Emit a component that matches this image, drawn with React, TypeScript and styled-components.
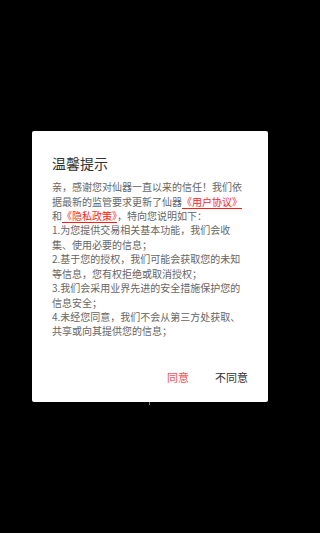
import React from "react";
import styled, { createGlobalStyle } from "styled-components";

const GlobalStyle = createGlobalStyle`
  html, body {
    margin: 0;
    padding: 0;
    background: #000000;
  }
  body {
    font-family: "Noto Sans CJK SC", "Noto Sans", sans-serif;
  }
`;

interface Piece {
  text: string;
  link?: boolean;
}

const lines: Piece[][] = [
  [{ text: "亲，感谢您对仙器一直以来的信任！我们依" }],
  [{ text: "据最新的监管要求更新了仙器" }, { text: "《用户协议》", link: true }],
  [{ text: "和" }, { text: "《隐私政策》", link: true }, { text: "，特向您说明如下：" }],
  [{ text: "1.为您提供交易相关基本功能，我们会收" }],
  [{ text: "集、使用必要的信息；" }],
  [{ text: "2.基于您的授权，我们可能会获取您的未知" }],
  [{ text: "等信息，您有权拒绝或取消授权；" }],
  [{ text: "3.我们会采用业界先进的安全措施保护您的" }],
  [{ text: "信息安全；" }],
  [{ text: "4.未经您同意，我们不会从第三方处获取、" }],
  [{ text: "共享或向其提供您的信息；" }],
];

export default function App() {
  return (
    <>
      <GlobalStyle />
      <Screen>
        <Dialog>
          <Title>温馨提示</Title>
          <Body>
            {lines.map((line, i) => (
              <Line key={i}>
                {line.map((p, j) =>
                  p.link ? <Link key={j}>{p.text}</Link> : <span key={j}>{p.text}</span>
                )}
              </Line>
            ))}
          </Body>
          <Actions>
            <ActionButton $primary>同意</ActionButton>
            <ActionButton>不同意</ActionButton>
          </Actions>
        </Dialog>
        <Tick />
      </Screen>
    </>
  );
}

const Screen = styled.div`
  position: relative;
  width: 300px;
  height: 533px;
  background: #000000;
  display: flex;
  align-items: center;
  justify-content: center;
  overflow: hidden;
`;

const Dialog = styled.div`
  position: relative;
  z-index: 1;
  width: 236px;
  box-sizing: border-box;
  background: #ffffff;
  border-radius: 2px;
  padding: 22px 20px 15px 20px;
  display: flex;
  flex-direction: column;
`;

const Title = styled.div`
  font-size: 14px;
  line-height: 20px;
  color: #333333;
  margin-bottom: 7px;
`;

const Body = styled.div`
  font-size: 10px;
  line-height: 14.4px;
  color: #666666;
`;

const Line = styled.div`
  white-space: nowrap;
`;

const Link = styled.span`
  color: #ff1a1a;
  text-decoration: underline;
  text-underline-offset: 2px;
`;

const Actions = styled.div`
  display: flex;
  justify-content: flex-end;
  align-items: center;
  gap: 26px;
  margin-top: 28px;
`;

const ActionButton = styled.button<{ $primary?: boolean }>`
  border: none;
  background: none;
  padding: 0;
  font-family: inherit;
  font-size: 11px;
  line-height: 20px;
  color: ${(p) => (p.$primary ? "#f25252" : "#333333")};
`;

const Tick = styled.div`
  position: absolute;
  left: 149px;
  top: 400px;
  width: 1px;
  height: 5px;
  background: #777777;
`;
